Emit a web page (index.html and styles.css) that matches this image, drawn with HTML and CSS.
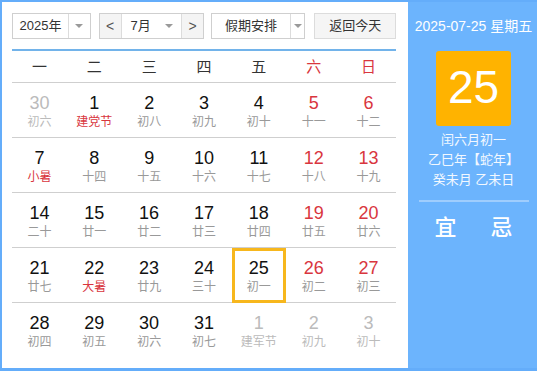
FILE: index.html
```html
<!DOCTYPE html>
<html lang="zh-CN">
<head>
<meta charset="utf-8">
<title>万年历</title>
<link rel="stylesheet" href="styles.css">
</head>
<body>
<div class="cal">
  <div class="main">
    <div class="toolbar">
      <div class="select year">
        <span class="sel-text">2025年</span>
        <span class="sel-arrow"><i class="tri"></i></span>
      </div>
      <div class="select month">
        <span class="nav">&lt;</span>
        <span class="sel-text">7月</span>
        <span class="sel-arrow m"><i class="tri"></i></span>
        <span class="nav">&gt;</span>
      </div>
      <div class="select holiday">
        <span class="sel-text">假期安排</span>
        <span class="sel-arrow"><i class="tri"></i></span>
      </div>
      <div class="btn-today">返回今天</div>
    </div>
    <div class="week">
      <span>一</span><span>二</span><span>三</span><span>四</span><span>五</span><span class="red">六</span><span class="red">日</span>
    </div>
    <div class="days">
      <div class="row">
        <div class="cell other"><b>30</b><i>初六</i></div>
        <div class="cell"><b>1</b><i class="fest">建党节</i></div>
        <div class="cell"><b>2</b><i>初八</i></div>
        <div class="cell"><b>3</b><i>初九</i></div>
        <div class="cell"><b>4</b><i>初十</i></div>
        <div class="cell we"><b>5</b><i>十一</i></div>
        <div class="cell we"><b>6</b><i>十二</i></div>
      </div>
      <div class="row">
        <div class="cell"><b>7</b><i class="fest">小暑</i></div>
        <div class="cell"><b>8</b><i>十四</i></div>
        <div class="cell"><b>9</b><i>十五</i></div>
        <div class="cell"><b>10</b><i>十六</i></div>
        <div class="cell"><b>11</b><i>十七</i></div>
        <div class="cell we"><b>12</b><i>十八</i></div>
        <div class="cell we"><b>13</b><i>十九</i></div>
      </div>
      <div class="row">
        <div class="cell"><b>14</b><i>二十</i></div>
        <div class="cell"><b>15</b><i>廿一</i></div>
        <div class="cell"><b>16</b><i>廿二</i></div>
        <div class="cell"><b>17</b><i>廿三</i></div>
        <div class="cell"><b>18</b><i>廿四</i></div>
        <div class="cell we"><b>19</b><i>廿五</i></div>
        <div class="cell we"><b>20</b><i>廿六</i></div>
      </div>
      <div class="row">
        <div class="cell"><b>21</b><i>廿七</i></div>
        <div class="cell"><b>22</b><i class="fest">大暑</i></div>
        <div class="cell"><b>23</b><i>廿九</i></div>
        <div class="cell"><b>24</b><i>三十</i></div>
        <div class="cell today"><b>25</b><i>初一</i></div>
        <div class="cell we"><b>26</b><i>初二</i></div>
        <div class="cell we"><b>27</b><i>初三</i></div>
      </div>
      <div class="row">
        <div class="cell"><b>28</b><i>初四</i></div>
        <div class="cell"><b>29</b><i>初五</i></div>
        <div class="cell"><b>30</b><i>初六</i></div>
        <div class="cell"><b>31</b><i>初七</i></div>
        <div class="cell other"><b>1</b><i>建军节</i></div>
        <div class="cell other"><b>2</b><i>初九</i></div>
        <div class="cell other"><b>3</b><i>初十</i></div>
      </div>
    </div>
  </div>
  <div class="side">
    <div class="side-date">2025-07-25 星期五</div>
    <div class="big-day">25</div>
    <div class="lunar">
      <div>闰六月初一</div>
      <div>乙巳年【蛇年】</div>
      <div>癸未月 乙未日</div>
    </div>
    <div class="divider"></div>
    <div class="yiji"><span>宜</span><span>忌</span></div>
  </div>
</div>
</body>
</html>
```

FILE: styles.css
```css
* { box-sizing: border-box; }
html, body { margin: 0; padding: 0; background: #fff; }
body {
  font-family: "Liberation Sans", "Noto Sans CJK SC", sans-serif;
  color: #222;
}
.cal {
  width: 537px;
  height: 371px;
  display: flex;
  border: 2px solid #64adfa;
  border-bottom-width: 3px;
  border-right: none;
  background: #6cb4fd;
}
.main {
  width: 406px;
  background: #fff;
  padding: 11px 12px 0 10px;
}
.toolbar {
  display: flex;
  height: 26px;
  font-size: 13px;
  color: #333;
}
.select {
  display: flex;
  border: 1px solid #cfcfcf;
  background: #fff;
  height: 26px;
  line-height: 24px;
}
.sel-text { text-align: center; }
.sel-arrow {
  border-left: 1px solid #dcdcdc;
  display: flex;
  align-items: center;
  justify-content: center;
}
.tri {
  width: 0; height: 0;
  border-left: 4px solid transparent;
  border-right: 4px solid transparent;
  border-top: 4px solid #9a9a9a;
}
.year { width: 79px; }
.year .sel-text { width: 55px; }
.year .sel-arrow { flex: 1; }
.month { width: 106px; margin-left: 8px; }
.month .nav {
  width: 22px;
  background: #f4f4f4;
  text-align: center;
  color: #555;
  font-size: 14px;
}
.month .nav:first-child { border-right: 1px solid #dcdcdc; }
.month .nav:last-child { border-left: 1px solid #dcdcdc; }
.month .sel-text { width: 36px; padding-left: 2px; }
.month .sel-arrow.m { border-left: none; flex: 1; }
.holiday { width: 95px; margin-left: 7px; }
.holiday .sel-text { width: 78px; }
.holiday .sel-arrow { flex: 1; }
.btn-today {
  width: 82px;
  margin-left: 9px;
  border: 1px solid #dcdcdc;
  background: #f5f5f5;
  height: 26px;
  line-height: 24px;
  text-align: center;
}
.week {
  margin-top: 10px;
  border-top: 2px solid #72b3ea;
  border-bottom: 1px solid #cfcfcf;
  display: grid;
  grid-template-columns: repeat(7, 1fr);
  height: 34px;
  line-height: 31px;
  font-size: 15px;
  color: #333;
  text-align: center;
}
.week .red { color: #d9363e; }
.row {
  display: grid;
  grid-template-columns: repeat(7, 1fr);
  height: 55px;
  border-bottom: 1px solid #cfcfcf;
}
.row:last-child { border-bottom: none; height: 54px; }
.cell {
  position: relative;
  display: flex;
  flex-direction: column;
  align-items: center;
  padding-top: 9px;
}
.cell b {
  font-weight: normal;
  font-size: 18px;
  line-height: 22px;
  color: #111;
}
.cell i {
  font-style: normal;
  font-size: 12px;
  line-height: 16px;
  color: #999;
}
.cell i.fest { color: #d9363e; }
.cell.we b { color: #d9363e; }
.cell.other b { color: #bbb; }
.cell.other i { color: #bbb; }
.cell.today::after {
  content: "";
  position: absolute;
  left: 1px; right: 0; top: 0; bottom: -1px;
  border: 3px solid #f7b71d;
}
.side {
  flex: 1;
  display: flex;
  flex-direction: column;
  align-items: center;
  color: #fff;
  padding-top: 14px;
  padding-left: 2px;
}
.side-date {
  font-size: 14px;
  line-height: 20px;
}
.big-day {
  margin-top: 15px;
  width: 75px;
  height: 75px;
  background: #ffb300;
  border-radius: 3px;
  font-size: 46px;
  line-height: 72px;
  text-align: center;
}
.lunar {
  margin-top: 4px;
  font-size: 13px;
  line-height: 20px;
  text-align: center;
  color: #f2f8ff;
}
.divider {
  margin-top: 10px;
  width: 110px;
  height: 2px;
  background: #9fcdfd;
}
.yiji {
  margin-top: 11px;
  display: flex;
  gap: 34px;
  font-size: 22px;
  line-height: 30px;
  font-weight: 500;
}
```
